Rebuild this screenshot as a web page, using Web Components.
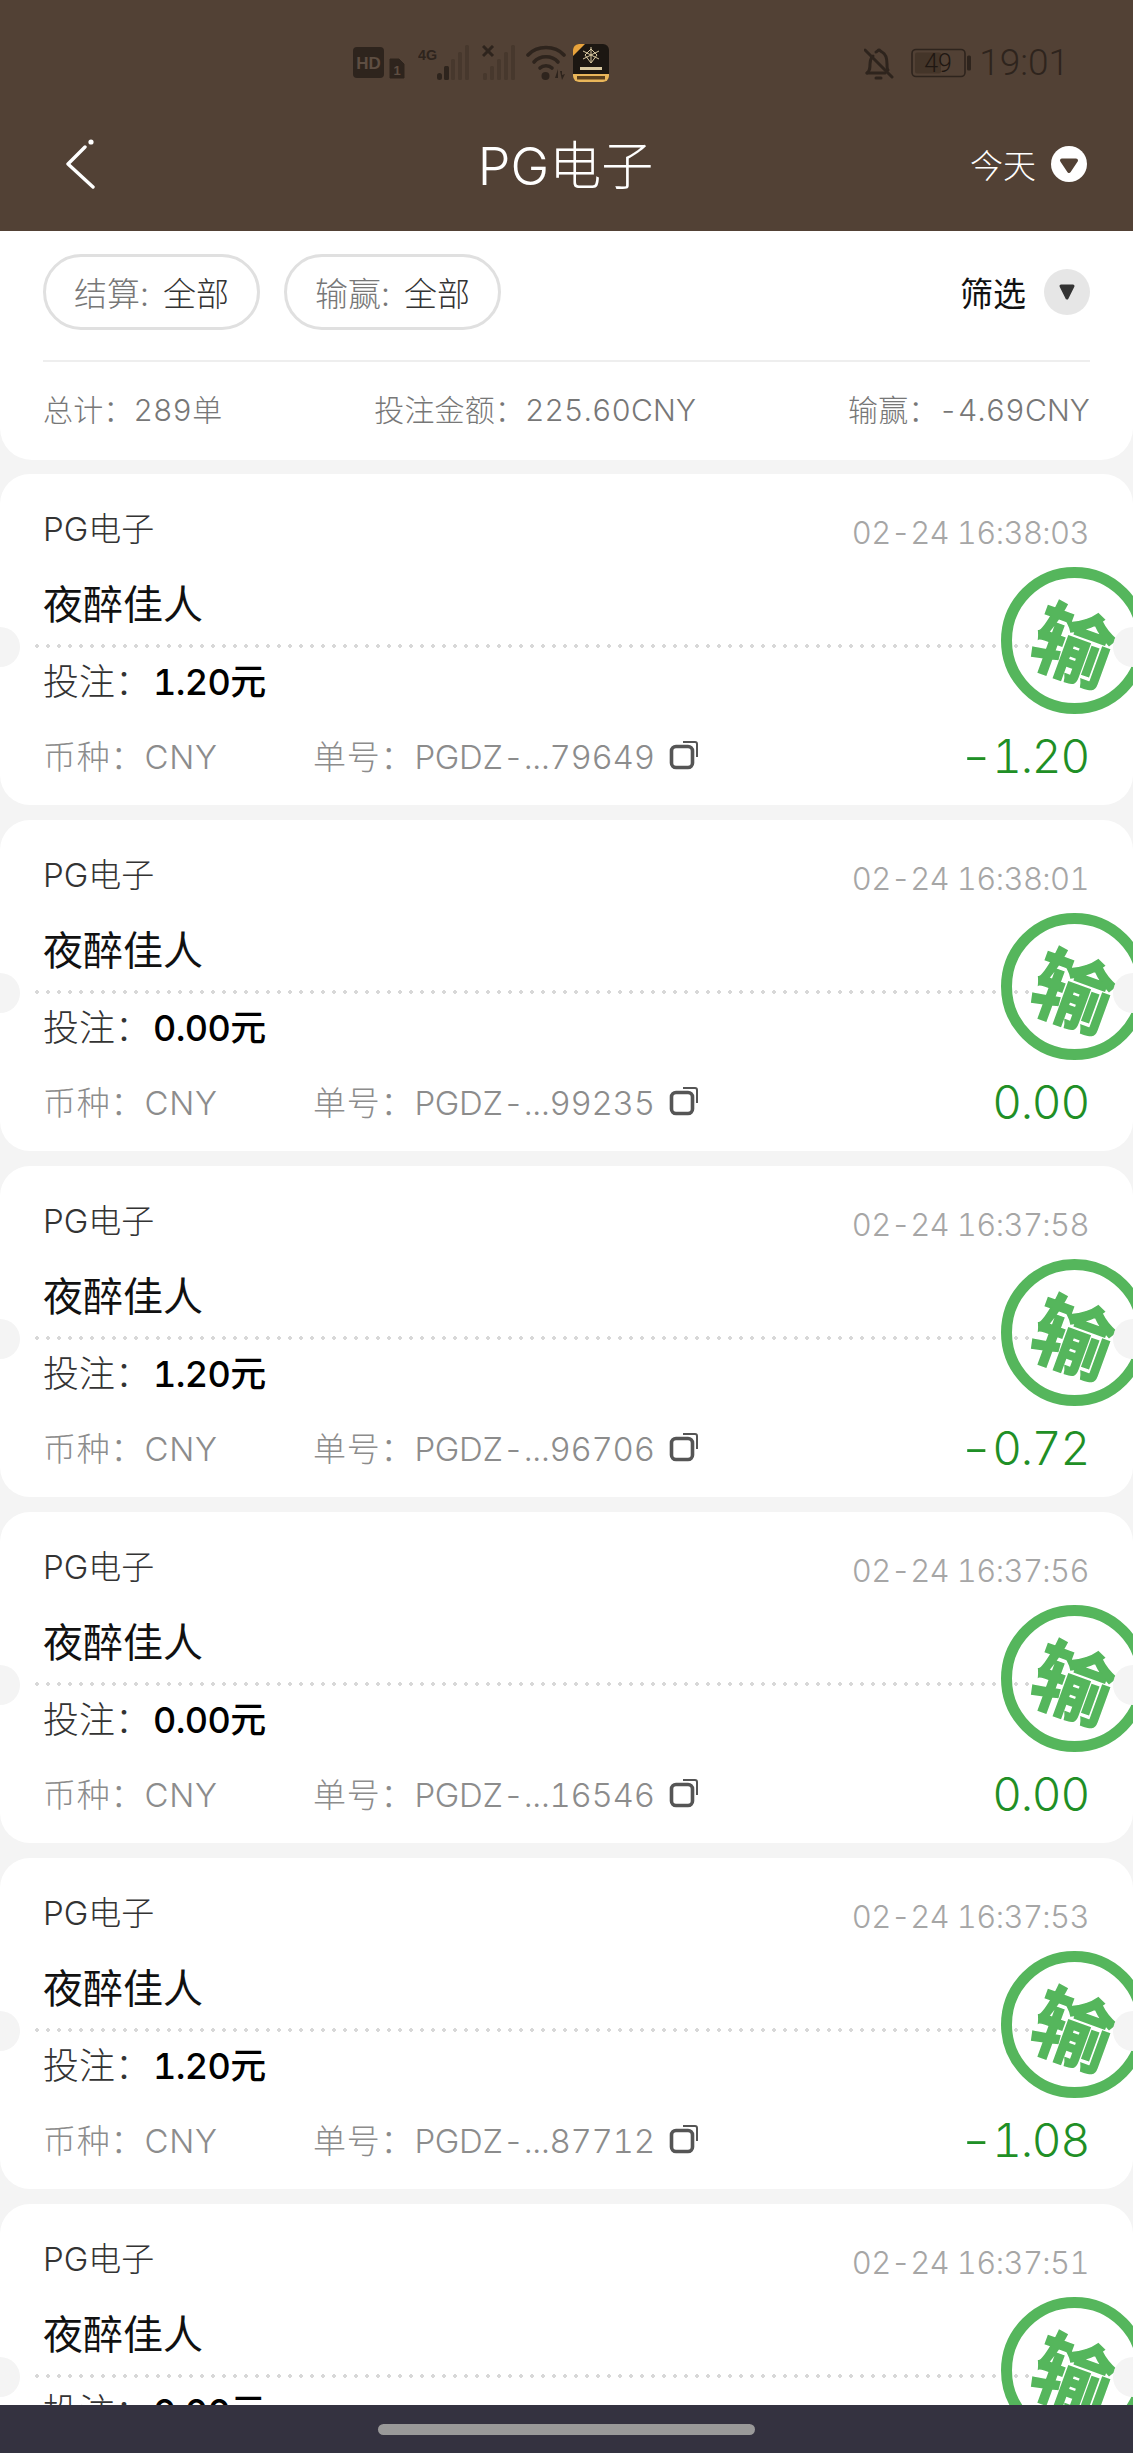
<!DOCTYPE html>
<html lang="zh">
<head>
<meta charset="utf-8">
<title>PG电子</title>
<style>
  html, body { margin: 0; height: 100%; background: #f4f4f4; }
  body { font-family: Inter, "Liberation Sans", "Noto Sans CJK SC", sans-serif; font-weight: 300; font-variant-numeric: tabular-nums; }
  bet-page { height: 100vh; }
</style>
</head>
<body>
<bet-page>
  <status-bar></status-bar>
  <nav-bar title="PG电子" range="今天"></nav-bar>
  <filter-panel>
    <filter-pill slot="pills" label="结算:">全部</filter-pill>
    <filter-pill slot="pills" label="输赢:">全部</filter-pill>
  </filter-panel>
  <bet-list>
    <bet-card time="02-24 16:38:03" stake="1.20元" order="PGDZ-...79649" amount="-1.20"></bet-card>
    <bet-card time="02-24 16:38:01" stake="0.00元" order="PGDZ-...99235" amount="0.00"></bet-card>
    <bet-card time="02-24 16:37:58" stake="1.20元" order="PGDZ-...96706" amount="-0.72"></bet-card>
    <bet-card time="02-24 16:37:56" stake="0.00元" order="PGDZ-...16546" amount="0.00"></bet-card>
    <bet-card time="02-24 16:37:53" stake="1.20元" order="PGDZ-...87712" amount="-1.08"></bet-card>
    <bet-card time="02-24 16:37:51" stake="0.00元"></bet-card>
  </bet-list>
  <home-bar></home-bar>
</bet-page>

<script>
class BetPage extends HTMLElement {
  connectedCallback() {
    this.attachShadow({ mode: 'open' });
    this.shadowRoot.innerHTML = `
      <style>
        :host { display: flex; flex-direction: column; overflow: hidden; }
      </style>
      <slot></slot>`;
  }
}

class StatusBar extends HTMLElement {
  connectedCallback() {
    this.attachShadow({ mode: 'open' });
    this.shadowRoot.innerHTML = `
      <style>
        :host {
          display: flex; align-items: center; justify-content: space-between;
          height: 75px; padding: 25px 64px 0 353px;
          background: #524135; color: #2e241d; flex: none;
        }
        .group { display: flex; align-items: center; }
        svg { display: block; }
        .time { font-family: Roboto, sans-serif; font-size: 37px; margin-left: 6px; line-height: 44px; }
      </style>
      <div class="group">
        <!-- HD + sim -->
        <svg width="52" height="36" viewBox="0 0 52 36">
          <rect x="0" y="2" width="31" height="31" rx="4" fill="#2e241d"/>
          <text x="15.5" y="23.5" text-anchor="middle" font-family="Liberation Sans" font-weight="700" font-size="17" fill="#5e4e42">HD</text>
          <path d="M37 14h9l5 5v14H37z" fill="#2e241d" stroke="#2e241d" stroke-width="1" stroke-linejoin="round"/>
          <text x="44" y="30" text-anchor="middle" font-family="Liberation Sans" font-weight="700" font-size="13" fill="#5e4e42">1</text>
        </svg>
        <!-- 4G signal -->
        <svg width="54" height="36" viewBox="0 0 54 36" style="margin-left:13px">
          <text x="0" y="15" font-family="Liberation Sans" font-weight="700" font-size="15" textLength="19" lengthAdjust="spacingAndGlyphs" fill="#2e241d">4G</text>
          <g fill="#2e241d">
            <rect x="19" y="28" width="5" height="7" rx="2.5"/>
            <rect x="26" y="21" width="5" height="14" rx="1.5"/>
          </g>
          <g fill="#47382d">
            <rect x="33" y="14" width="4" height="21" rx="1.5"/>
            <rect x="40" y="7" width="4" height="28" rx="1.5"/>
            <rect x="47" y="0" width="4" height="35" rx="1.5"/>
          </g>
        </svg>
        <!-- no-sim signal -->
        <svg width="36" height="36" viewBox="0 0 36 36" style="margin-left:10px">
          <path d="M1 1l10 10M11 1L1 11" stroke="#2e241d" stroke-width="3"/>
          <g fill="#47382d">
            <rect x="1" y="28" width="4" height="7" rx="1.5"/>
            <rect x="8" y="21" width="4" height="14" rx="1.5"/>
            <rect x="15" y="14" width="4" height="21" rx="1.5"/>
            <rect x="22" y="7" width="4" height="28" rx="1.5"/>
            <rect x="29" y="0" width="4" height="35" rx="1.5"/>
          </g>
        </svg>
        <!-- wifi -->
        <svg width="42" height="36" viewBox="0 0 42 36" style="margin-left:8px">
          <g fill="none" stroke="#2e241d" stroke-width="3.6" stroke-linecap="round">
            <path d="M2 10C11 0 29 0 38 10"/>
            <path d="M8 17C14 10 26 10 32 17"/>
            <path d="M14 23C17 20 23 20 26 23"/>
          </g>
          <circle cx="19.5" cy="31" r="4" fill="#2e241d"/>
          <path d="M29 33l3-9v9zM34 26h2v4l3-1-3 6z" fill="#2e241d"/>
        </svg>
        <!-- app notification icon -->
        <svg width="36" height="38" viewBox="0 0 36 38" style="margin-left:5px">
          <rect width="36" height="38" rx="6" fill="#1c1712"/>
          <path d="M0 12V6a6 6 0 0 1 6-6h6z" fill="#e8a33c"/>
          <path d="M0 30h36v2a6 6 0 0 1-6 6H6a6 6 0 0 1-6-6z" fill="#e9b65a"/>
          <g stroke="#d9c9a0" stroke-width="1" fill="none">
            <path d="M18 3v16M10 7l16 8M26 7l-16 8"/>
            <path d="M18 5l6 6-6 8-6-8z"/>
          </g>
          <rect x="7" y="23" width="22" height="3" fill="#d9c9a0"/>
          <rect x="4" y="32" width="28" height="3.5" fill="#5a3f1c"/>
        </svg>
      </div>
      <div class="group">
        <!-- muted bell -->
        <svg width="30" height="36" viewBox="0 0 30 36">
          <g fill="none" stroke="#2e241d" stroke-width="3" stroke-linecap="round" stroke-linejoin="round">
            <path d="M3 28c3-2 3-5 3-9 0-3 1-6 3-8M12 7c1 0 2-2 3-2s2 2 3 2c4 2 5 6 5 12 0 3 0 5 1 6"/>
            <path d="M3 28h18"/>
            <path d="M1 5l27 27"/>
            <path d="M12 33h5"/>
          </g>
        </svg>
        <!-- battery -->
        <svg width="62" height="30" viewBox="0 0 62 30" style="margin-left:17px">
          <rect x="1" y="1.5" width="53" height="27" rx="4" fill="none" stroke="#2e241d" stroke-width="1.6"/>
          <rect x="4" y="4.5" width="26" height="21" rx="2" fill="#443529"/>
          <rect x="56" y="7.5" width="4" height="15" rx="1.5" fill="#2e241d"/>
          <text x="27" y="24" text-anchor="middle" font-family="Roboto" font-size="25" fill="#1f1712">49</text>
        </svg>
        <span class="time">19:01</span>
      </div>`;
  }
}

class NavBar extends HTMLElement {
  connectedCallback() {
    this.attachShadow({ mode: 'open' });
    this.shadowRoot.innerHTML = `
      <style>
        :host {
          display: grid; grid-template-columns: 1fr auto 1fr; align-items: center;
          height: 131px; background: #524135; color: #fff; flex: none;
          padding: 0 46px; box-sizing: border-box;
        }
        .back { display: block; margin: 0 0 4px 20px; }
        h1 { margin: 3px 2px 0 0; font-size: 52px; font-weight: 300; line-height: 60px; }
        .range { display: flex; justify-content: flex-end; align-items: center; gap: 15px; font-size: 33px; margin-bottom: 4px; }
      </style>
      <svg class="back" width="32" height="52" viewBox="0 0 32 52">
        <path d="M19 9L2 26l25 23" fill="none" stroke="#fff" stroke-width="3.4" stroke-linecap="round" stroke-linejoin="round"/>
        <circle cx="25" cy="4" r="2.6" fill="#fff"/>
      </svg>
      <h1>${this.getAttribute('title')}</h1>
      <div class="range">
        <span>${this.getAttribute('range')}</span>
        <svg width="36" height="36" viewBox="0 0 36 36">
          <circle cx="18" cy="18" r="18" fill="#fff"/>
          <path d="M11 14.5h14l-7 10.5z" fill="#524135" stroke="#524135" stroke-width="4" stroke-linejoin="round"/>
        </svg>
      </div>`;
  }
}

class FilterPill extends HTMLElement {
  connectedCallback() {
    this.attachShadow({ mode: 'open' });
    this.shadowRoot.innerHTML = `
      <style>
        :host {
          display: inline-flex; align-items: center; justify-content: center; gap: 14px;
          width: 217px; height: 76px; box-sizing: border-box;
          border: 3px solid #e0e0e0; border-radius: 38px;
          font-size: 33px; color: #333;
        }
        .label { color: #777; }
      </style>
      <span class="label">${this.getAttribute('label')}</span><slot></slot>`;
  }
}

class FilterPanel extends HTMLElement {
  connectedCallback() {
    this.attachShadow({ mode: 'open' });
    this.shadowRoot.innerHTML = `
      <style>
        :host {
          display: block; flex: none; background: #fff; height: 229px;
          padding: 23px 43px 0 43px; box-sizing: border-box;
          border-radius: 0 0 32px 32px;
        }
        .top { display: flex; align-items: center; gap: 24px; height: 76px; }
        .filter { margin-left: auto; display: flex; align-items: center; gap: 18px; font-size: 33px; color: #111; font-weight: 400; }
        .dot { width: 46px; height: 46px; border-radius: 50%; background: #e6e6e6; display: flex; align-items: center; justify-content: center; }
        .sum {
          margin-top: 30px; border-top: 2px solid #eee; padding-top: 30px;
          display: flex; justify-content: space-between;
          font-size: 30px; line-height: 36px; color: #777; letter-spacing: 0.15px;
        }
      </style>
      <div class="top">
        <slot name="pills"></slot>
        <div class="filter">
          <span>筛选</span>
          <span class="dot">
            <svg width="22" height="20" viewBox="0 0 22 20"><path d="M5 4h12l-6 12z" fill="#333" stroke="#333" stroke-width="3" stroke-linejoin="round"/></svg>
          </span>
        </div>
      </div>
      <div class="sum">
        <span>总计：289单</span>
        <span>投注金额：225.60CNY</span>
        <span>输赢：-4.69CNY</span>
      </div>`;
  }
}

class BetList extends HTMLElement {
  connectedCallback() {
    this.attachShadow({ mode: 'open' });
    this.shadowRoot.innerHTML = `
      <style>
        :host { display: flex; flex-direction: column; gap: 15px; flex: 1; min-height: 0; overflow: hidden; padding-top: 14px; background: #f4f4f4; }
      </style>
      <slot></slot>`;
  }
}

class BetCard extends HTMLElement {
  connectedCallback() {
    const order = this.getAttribute('order');
    // wide minus like the original font has
    const amount = (this.getAttribute('amount') || '').replace(/^-/, '<span class="sign">-</span>');
    this.attachShadow({ mode: 'open' });
    this.shadowRoot.innerHTML = `
      <style>
        :host {
          display: block; position: relative; flex: none; overflow: hidden;
          height: 331px; box-sizing: border-box; padding: 31px 44px 0 43px;
          background: #fff; border-radius: 30px;
        }
        .head { display: flex; justify-content: space-between; align-items: center; height: 48px; line-height: 48px; }
        .game { font-size: 33px; color: #333; }
        .time { font-size: 31px; color: #a6a6a6; margin-top: 8px; letter-spacing: -0.6px; }
        .player { margin-top: 23px; height: 58px; line-height: 58px; font-size: 40px; color: #111; font-weight: 400; }
        .sep {
          margin-left: -8px; width: 1000px; margin-top: 10px; height: 4px;
          background: radial-gradient(circle at 2px 2px, #d8d8d8 1.7px, transparent 2px) 0 0 / 11px 4px repeat-x;
        }
        .stake { height: 68px; line-height: 68px; font-size: 36px; color: #333; }
        .stake b { color: #000; font-weight: 500; margin-left: 2px; letter-spacing: -0.6px; }
        .foot { margin-top: 14px; display: flex; align-items: center; height: 50px; font-size: 33px; color: #8c8c8c; letter-spacing: 0.8px; }
        .cur { width: 270px; flex: none; }
        .no { letter-spacing: -0.3px; }
        .copy { margin-left: 14px; display: block; }
        .amount { margin-left: auto; margin-top: 2px; font-size: 46px; color: #1f8f26; letter-spacing: -1.2px; }
        .sign { display: inline-block; transform: scaleX(1.3); transform-origin: left center; margin-right: 7px; }
        .notch { position: absolute; top: 153px; width: 40px; height: 40px; border-radius: 50%; background: #f4f4f4; z-index: 2; }
        .notch.l { left: -20px; }
        .notch.r { right: -20px; }
        .stamp {
          position: absolute; left: 1001px; top: 93px; width: 147px; height: 147px; box-sizing: border-box;
          border: 11px solid #55b65c; border-radius: 50%; color: #55b65c;
          display: flex; align-items: center; justify-content: center;
        }
        .stamp span { font-size: 80px; font-weight: 700; line-height: 1; transform: rotate(20deg); -webkit-text-stroke: 1.5px #55b65c; font-family: "Noto Sans CJK SC", sans-serif; }
      </style>
      <div class="head"><span class="game">PG电子</span><span class="time">${this.getAttribute('time')}</span></div>
      <div class="player">夜醉佳人</div>
      <div class="sep"></div>
      <div class="stake">投注：<b>${this.getAttribute('stake')}</b></div>
      ${order ? `<div class="foot">
        <span class="cur">币种：CNY</span>
        <span>单号：<span class="no">${order}</span></span>
        <svg class="copy" width="30" height="30" viewBox="0 0 30 30" fill="none" stroke="#555">
          <rect x="2.5" y="6.5" width="21" height="21" rx="4.5" stroke-width="3.6"/>
          <path d="M14 2h12a2 2 0 0 1 2 2v13" stroke-width="2"/>
        </svg>
        <span class="amount">${amount}</span>
      </div>` : ''}
      <div class="stamp"><span>输</span></div>
      <div class="notch l"></div>
      <div class="notch r"></div>`;
  }
}

class HomeBar extends HTMLElement {
  connectedCallback() {
    this.attachShadow({ mode: 'open' });
    this.shadowRoot.innerHTML = `
      <style>
        :host { display: flex; align-items: center; justify-content: center; flex: none; height: 48px; background: #343240; }
        div { width: 377px; height: 11px; border-radius: 6px; background: #999; margin-top: 1px; }
      </style>
      <div></div>`;
  }
}

customElements.define('bet-page', BetPage);
customElements.define('status-bar', StatusBar);
customElements.define('nav-bar', NavBar);
customElements.define('filter-pill', FilterPill);
customElements.define('filter-panel', FilterPanel);
customElements.define('bet-list', BetList);
customElements.define('bet-card', BetCard);
customElements.define('home-bar', HomeBar);
</script>
</body>
</html>
